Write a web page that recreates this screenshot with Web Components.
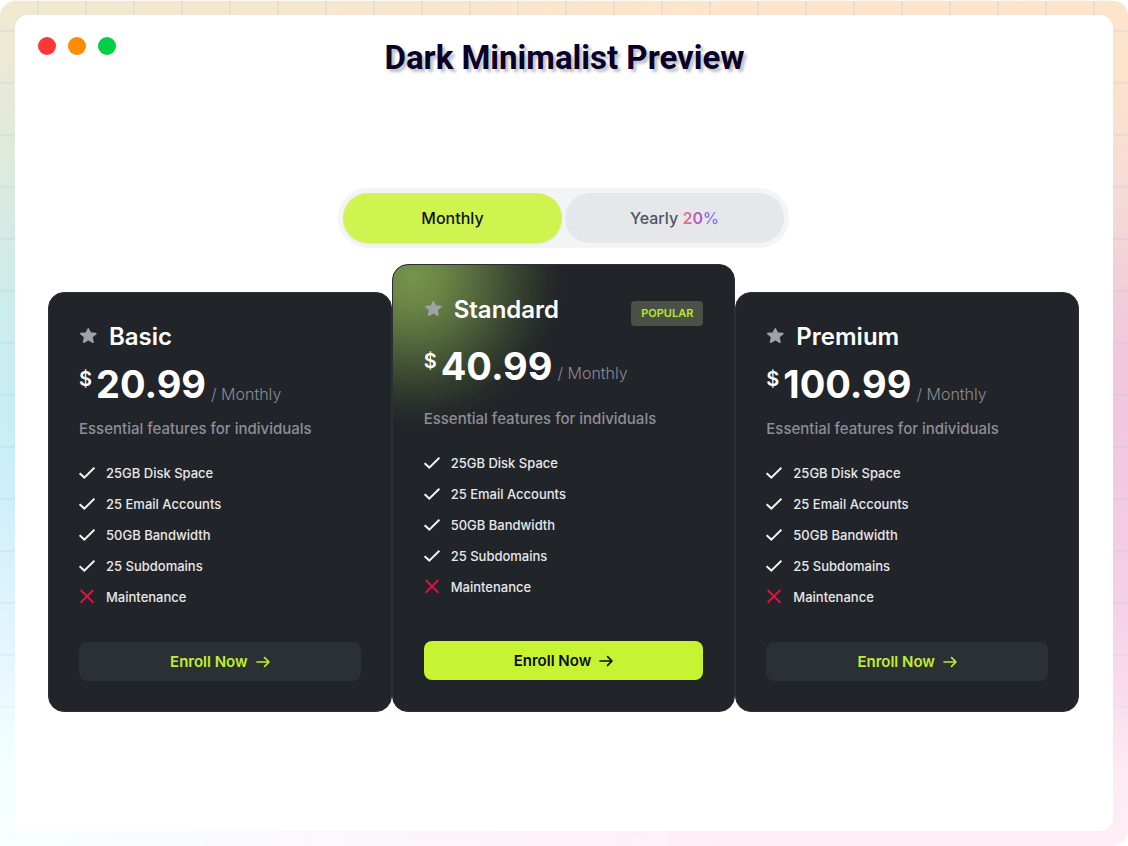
<!DOCTYPE html>
<html lang="en">
<head>
<meta charset="utf-8">
<meta name="viewport" content="width=device-width, initial-scale=1">
<title>Dark Minimalist Preview</title>
<style>
  body { margin: 0; background: #fff; font-family: Inter, "Noto Sans", sans-serif; }
</style>
</head>
<body>
<preview-frame>
  <window-dots slot="controls"></window-dots>
  <span slot="title">Dark Minimalist Preview</span>
  <billing-toggle></billing-toggle>
  <plan-grid>
    <plan-card amount="20.99">
      <span slot="name">Basic</span>
      <plan-feature>25GB Disk Space</plan-feature>
      <plan-feature>25 Email Accounts</plan-feature>
      <plan-feature>50GB Bandwidth</plan-feature>
      <plan-feature>25 Subdomains</plan-feature>
      <plan-feature excluded>Maintenance</plan-feature>
    </plan-card>
    <plan-card amount="40.99" featured>
      <span slot="name">Standard</span>
      <plan-badge slot="badge">POPULAR</plan-badge>
      <plan-feature>25GB Disk Space</plan-feature>
      <plan-feature>25 Email Accounts</plan-feature>
      <plan-feature>50GB Bandwidth</plan-feature>
      <plan-feature>25 Subdomains</plan-feature>
      <plan-feature excluded>Maintenance</plan-feature>
    </plan-card>
    <plan-card amount="100.99">
      <span slot="name">Premium</span>
      <plan-feature>25GB Disk Space</plan-feature>
      <plan-feature>25 Email Accounts</plan-feature>
      <plan-feature>50GB Bandwidth</plan-feature>
      <plan-feature>25 Subdomains</plan-feature>
      <plan-feature excluded>Maintenance</plan-feature>
    </plan-card>
  </plan-grid>
</preview-frame>

<script>
  const define = (name, html, setup) => {
    const template = document.createElement('template');
    template.innerHTML = html;
    customElements.define(name, class extends HTMLElement {
      constructor() {
        super();
        this.attachShadow({ mode: 'open' }).append(template.content.cloneNode(true));
      }
      connectedCallback() {
        if (setup && !this.ready) {
          this.ready = true;
          setup(this, this.shadowRoot);
        }
      }
    });
  };

  define('preview-frame', `
    <style>
      :host {
        display: grid; box-sizing: border-box; position: relative; isolation: isolate;
        min-height: 100vh; padding: 14px 15px 15px; overflow: hidden; border-radius: 16px;
        border-top: 1px solid #faf8f3;
        background: linear-gradient(#f1e9d0, #e6ead8 12%, #d6eae4 26%, #ccedeb 36%, #c8eef4 48%, #cdf0fa 58%, #daf3fc 68%, #e5f6ff 77%, #f3ffff 90%, #f9ffff);
      }
      /* warm and pink side of the backdrop, blended in from left to right */
      :host::before {
        content: ""; position: absolute; inset: 0; z-index: -2;
        background: linear-gradient(#fde5cb, #fce2cc 10%, #f5dbd6 23%, #f1cdd9 34%, #f0c6dc 44%, #f2c9e2 57%, #f4cfe6 70%, #f9dcec 82%, #fdeaf4 91%, #feeff6);
        mask-image: linear-gradient(90deg, transparent, #000 65%);
      }
      /* faint grid lines */
      :host::after {
        content: ""; position: absolute; inset: 0; z-index: -1;
        background:
          linear-gradient(90deg, rgba(175, 195, 235, .22) 2px, transparent 2px) 37px 0 / 48px 52px,
          linear-gradient(rgba(175, 195, 235, .22) 2px, transparent 2px) 0 29px / 48px 52px;
        mask-image: linear-gradient(#000 70%, transparent 93%);
      }
      main { box-sizing: border-box; background: #fff; border-radius: 13px; padding: 22px 34px 0 33px; min-width: 0; }
      header { display: grid; grid-template-columns: 1fr auto 1fr; margin: 0 -12px 109px -10px; }
      h1 {
        margin: 0; font: 700 33px/42px Roboto, sans-serif; color: #080028;
        text-shadow: 3px 3px 3px rgba(0, 0, 0, .25);
      }
    </style>
    <main>
      <header>
        <slot name="controls"></slot>
        <h1><slot name="title"></slot></h1>
      </header>
      <slot></slot>
    </main>`);

  define('window-dots', `
    <style>
      :host { display: flex; gap: 12px; }
      i { width: 18px; height: 18px; border-radius: 50%; background: #ff3737; }
      i:nth-of-type(2) { background: #ff8b00; }
      i:nth-of-type(3) { background: #00cf47; }
    </style>
    <i></i><i></i><i></i>`);

  define('billing-toggle', `
    <style>
      :host {
        display: grid; grid-template-columns: 1fr 1fr; gap: 3px; box-sizing: border-box;
        width: 451px; max-width: 100%; margin: 0 auto 16px; padding: 5px;
        border-radius: 30px; background: #f3f4f6;
      }
      button {
        height: 50px; padding: 0; border: 0; border-radius: 25px; background: #e5e7eb;
        font: 500 16px/24px Inter, sans-serif; color: #4b5563; cursor: pointer;
      }
      button[aria-pressed="true"] { background: #d0f44f; color: #10130a; box-shadow: 0 1px 2px rgba(0, 0, 0, .08); }
      b {
        font-weight: 600; color: transparent;
        background: linear-gradient(90deg, #f87171, #a855d0 50%, #6090ff); background-clip: text;
      }
    </style>
    <button type="button" aria-pressed="true">Monthly</button>
    <button type="button" aria-pressed="false">Yearly <b>20%</b></button>`,
  (host, root) => {
    const buttons = [...root.querySelectorAll('button')];
    root.addEventListener('click', (event) => {
      const hit = event.target.closest('button');
      if (hit) buttons.forEach((b) => b.setAttribute('aria-pressed', String(b === hit)));
    });
  });

  define('plan-grid', `
    <style>
      :host { display: grid; grid-template-columns: repeat(3, minmax(0, 1fr)); align-items: end; }
    </style>
    <slot></slot>`);

  define('plan-badge', `
    <style>
      :host {
        display: block; padding: 0 10px; border-radius: 4px; background: #4c5046;
        font: 600 11px/25px Inter, sans-serif; color: #b5ea2c;
      }
    </style>
    <slot></slot>`);

  define('plan-feature', `
    <style>
      :host { display: flex; align-items: center; gap: 11px; font: 500 13px/20px Inter, sans-serif; color: #e8e8ea; }
      svg { flex: none; width: 16px; height: 16px; fill: none; stroke: #f4f4f5; stroke-width: 2; }
      .cross { display: none; stroke: #dc143c; }
      :host([excluded]) .check { display: none; }
      :host([excluded]) .cross { display: block; }
    </style>
    <svg class="check" viewBox="0 0 16 16" aria-hidden="true"><path d="M.6 8.2 5.3 12.6 15.4 2.7"/></svg>
    <svg class="cross" viewBox="0 0 16 16" aria-hidden="true"><path d="M1.6 1 14.4 13.8M14.4 1 1.6 13.8"/></svg>
    <span><slot></slot></span>`,
  (host) => host.setAttribute('role', 'listitem'));

  define('plan-card', `
    <style>
      :host {
        display: block; box-sizing: border-box; padding: 30px; border: 1px solid #2c3034;
        border-radius: 16px; background: #212429; color: #fff;
        --price-top: 8px; --term-top: 19px; --text-top: 8px; --list-top: 22px; --list-bottom: 35px;
        --button: #2b3034; --button-text: #c0ee2e;
      }
      :host([featured]) {
        padding: 31px;
        --price-top: 17px; --term-top: 14px; --text-top: 16px; --list-top: 22px; --list-bottom: 44px;
        --button: #c6f432; --button-text: #0b0d08;
        background: #212429 radial-gradient(circle at 20px 12px, #76944a, #6a8545 30px, #53683d 65px, #37432f 105px, #262b2a 135px, #212429 152px);
      }
      .head { display: flex; align-items: flex-start; justify-content: space-between; height: 28px; }
      h2 { display: flex; align-items: center; gap: 12px; margin: 0; font: 600 24px/28px Inter, sans-serif; }
      .star { width: 18px; height: 18px; fill: #a1a1aa; stroke: #a1a1aa; stroke-width: 2; stroke-linejoin: round; }
      .badge { margin-top: 5px; }
      .price { display: flex; align-items: center; height: 50px; margin: var(--price-top) 0 0; }
      .price sup { align-self: flex-start; margin-right: 4px; font: 600 20px/40px Inter, sans-serif; }
      .price strong { font: 700 38px/50px Inter, sans-serif; }
      .price span { margin: var(--term-top) 0 0 5px; font: 300 16px/24px Inter, sans-serif; color: #8a8b92; }
      .text { margin: var(--text-top) 0 0; font: 500 15px/24px Inter, sans-serif; color: #8e8e95; }
      .list { display: grid; gap: 11px; margin: var(--list-top) 0 var(--list-bottom); }
      button {
        display: flex; align-items: center; justify-content: center; gap: 8px; width: 100%; height: 39px;
        padding: 0; border: 0; border-radius: 8px; background: var(--button); color: var(--button-text);
        font: 600 15px/24px Inter, sans-serif; cursor: pointer;
      }
      .arrow { width: 14px; height: 14px; fill: none; stroke: currentColor; stroke-width: 1.6; stroke-linecap: round; stroke-linejoin: round; }
    </style>
    <div class="head">
      <h2>
        <svg class="star" viewBox="0 0 18 18" aria-hidden="true"><path d="M9.3 .9 11.4 5 16.8 5.6 12.9 9 14 14.2 9.3 11.6 4.6 14.2 5.7 9 1.8 5.6 7.2 5Z" stroke-width="1.6"/></svg>
        <slot name="name"></slot>
      </h2>
      <div class="badge"><slot name="badge"></slot></div>
    </div>
    <p class="price"><sup>$</sup><strong></strong><span>/ Monthly</span></p>
    <p class="text">Essential features for individuals</p>
    <div class="list" role="list"><slot></slot></div>
    <button type="button">Enroll Now
      <svg class="arrow" viewBox="0 0 14 14" aria-hidden="true"><path d="M1 7H13M8.6 2.6 13 7 8.6 11.4"/></svg>
    </button>`,
  (host, root) => {
    root.querySelector('strong').textContent = host.getAttribute('amount');
  });
</script>
</body>
</html>
